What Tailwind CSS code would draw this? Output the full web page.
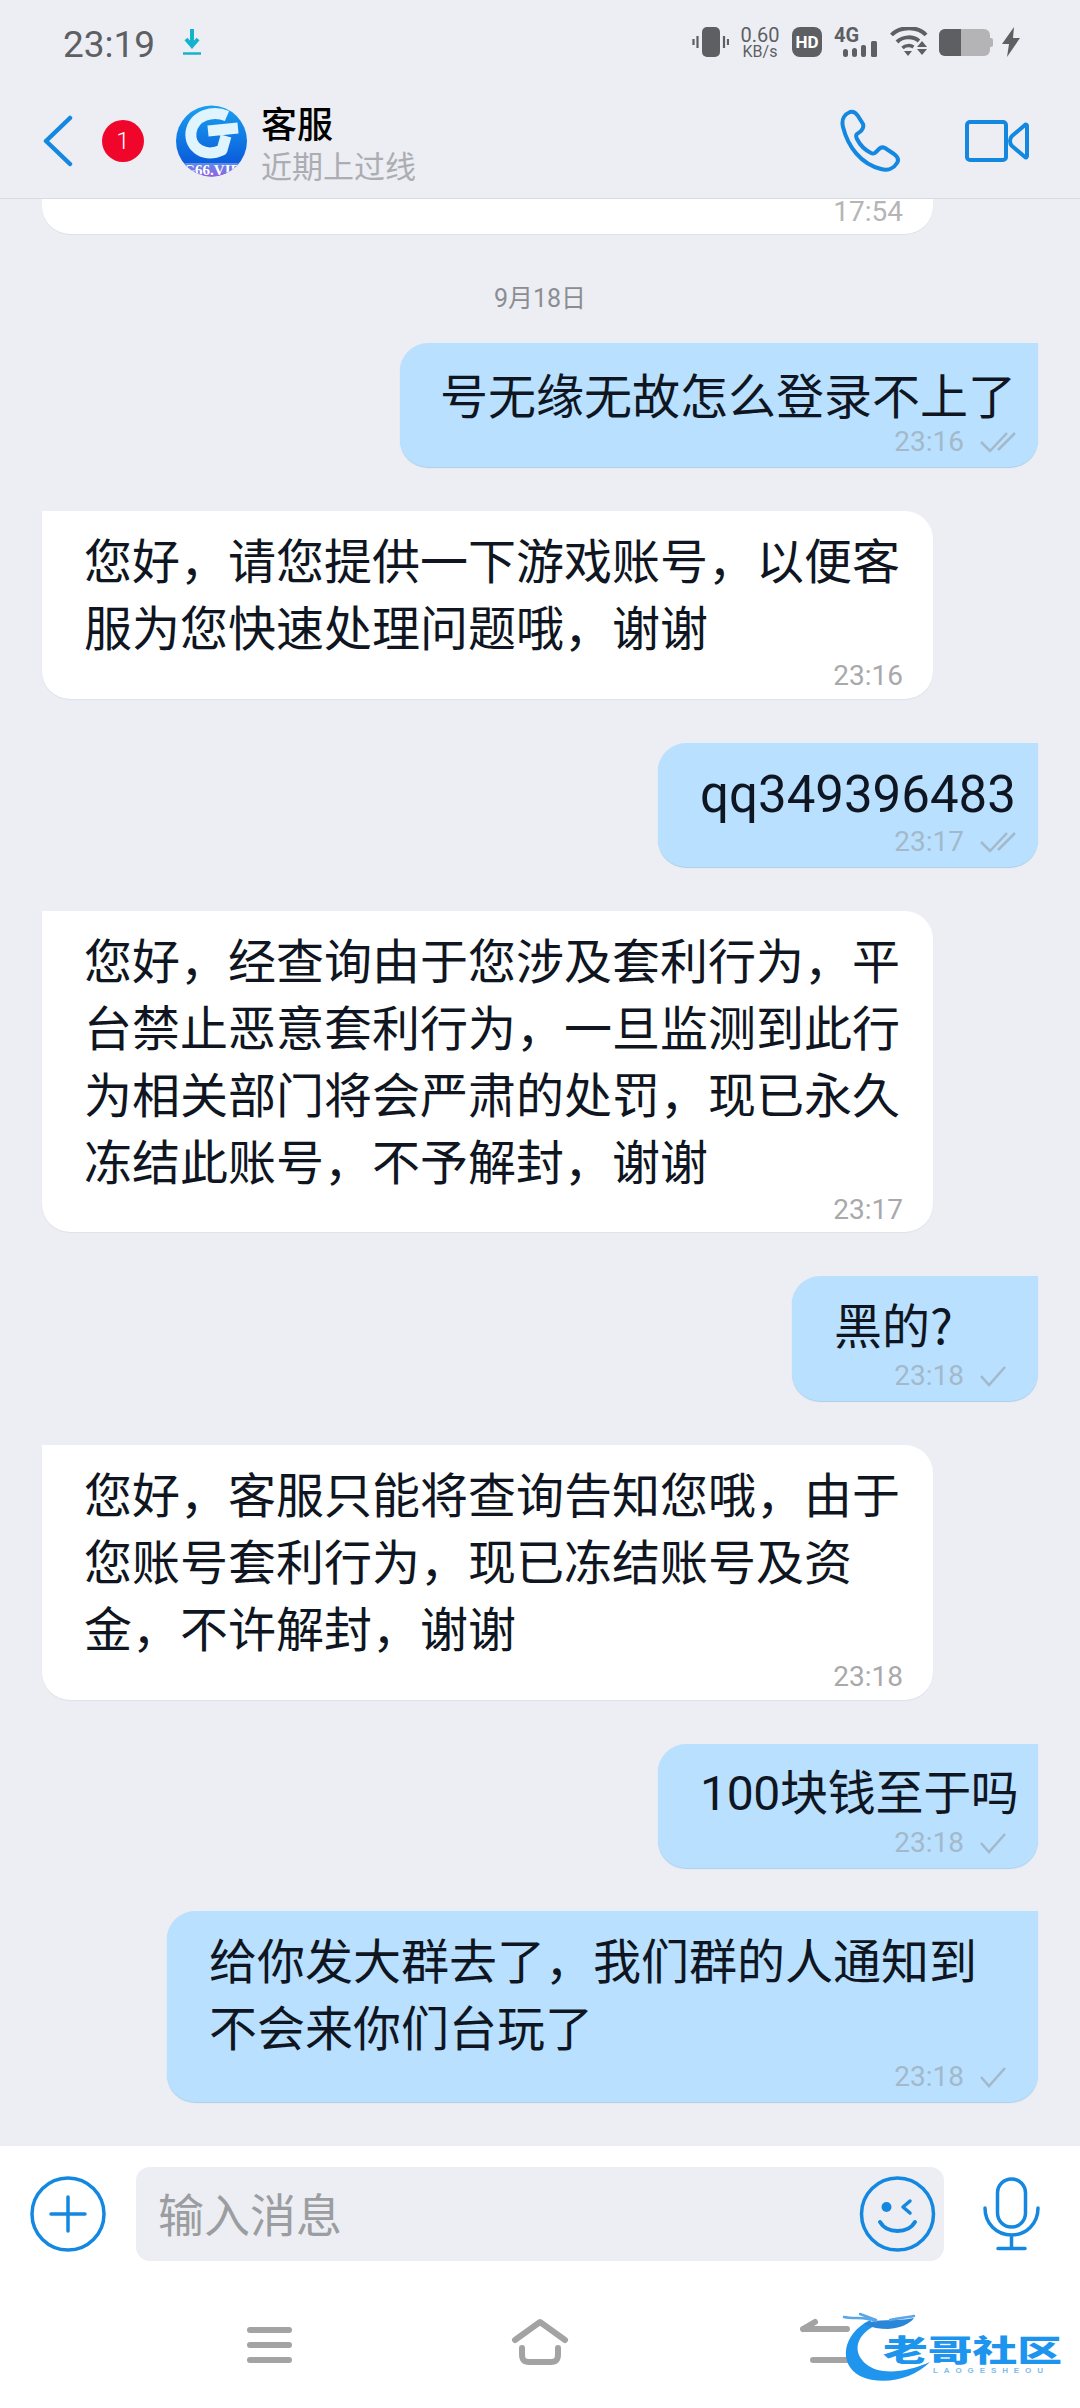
<!DOCTYPE html>
<html lang="zh"><head><meta charset="utf-8">
<script src="https://cdn.jsdelivr.net/npm/@tailwindcss/browser@4"></script>
</head>
<body class="m-0">
<div class="w-[1080px] h-[2408px] overflow-hidden bg-[#eceef3] flex flex-col font-['Noto_Sans','Noto_Sans_CJK_SC',sans-serif] text-[#0f1622] relative">

<!-- status bar -->
<div class="h-[84px] flex items-center pl-[63px] pr-[60px] shrink-0">
  <span class="text-[37px] text-[#5d5f63] font-['Roboto',sans-serif] leading-none w-[119px] pt-[4px]">23:19</span>
  <svg width="20" height="28" viewBox="0 0 20 28" fill="none"><path d="M10 1v16M4 11l6 7 6-7" stroke="#14b3cd" stroke-width="4"/><path d="M1 25.500h18" stroke="#14b3cd" stroke-width="2.500"/></svg>
  <div class="ml-auto flex items-center">
    <svg width="37" height="30" viewBox="0 0 37 30"><rect x="10" y="0" width="18" height="30" rx="5" fill="#5d5f63"/><path d="M5.500 9v12M1.500 12v6M32 9v12M36 12v6" stroke="#5d5f63" stroke-width="2.200"/></svg>
    <div class="ml-[13px] w-[36px] flex flex-col items-center text-[#5d5f63] font-['Roboto',sans-serif]"><span class="text-[20px] leading-[18px]">0.60</span><span class="text-[16px] leading-[15px]">KB/s</span></div>
    <div class="ml-[14px] w-[30px] h-[30px] bg-[#5d5f63] rounded-[8px] text-white text-[17px] font-bold flex items-center justify-center font-['Roboto',sans-serif] leading-none">HD</div>
    <svg class="ml-[12px]" width="43" height="30" viewBox="0 0 43 30"><text x="0" y="15" font-family="Roboto" font-weight="700" font-size="20" fill="#5d5f63">4G</text><rect x="9" y="22" width="5" height="8" rx="2.500" fill="#5d5f63"/><rect x="18" y="21" width="5" height="9" rx="2.500" fill="#5d5f63"/><rect x="27" y="18" width="5" height="12" rx="2" fill="#5d5f63"/><rect x="37" y="14" width="6" height="16" rx="1.500" fill="#5d5f63"/></svg>
    <svg class="ml-[13px]" width="38" height="30" viewBox="0 0 38 30" fill="none"><path d="M1.500 8C10-1 28-1 36 8" stroke="#5d5f63" stroke-width="4"/><path d="M7 15c6-6 16-6 22-1" stroke="#5d5f63" stroke-width="4"/><path d="M12.500 21c3-3 8-3 11-1" stroke="#5d5f63" stroke-width="3.500"/><path d="M14 24h8l-4 5zM32 14l5 6H27zM27 22h10l-5 6z" fill="#5d5f63"/></svg>
    <div class="ml-[11px] w-[51px] h-[27px] rounded-[6px] overflow-hidden flex bg-[#b4b4b6]"><div class="w-[22px] bg-[#5d5f63]"></div></div>
    <div class="w-[3px] h-[9px] bg-[#b4b4b6] rounded-r-[2px]"></div>
    <svg class="ml-[9px]" width="18" height="30" viewBox="0 0 18 30"><path d="M12 0 0 17h7l-2 13L18 11h-7z" fill="#5d5f63"/></svg>
  </div>
</div>

<!-- title bar -->
<div class="h-[115px] border-b-[1px] border-[#d9dadf] flex items-center shrink-0 pl-[43px] pr-[51px]">
  <svg width="30" height="52" viewBox="0 0 30 52" fill="none"><path d="M27 3 3 26l24 23" stroke="#1488e0" stroke-width="4.500" stroke-linecap="round" stroke-linejoin="round"/></svg>
  <div class="ml-[29px] w-[42px] h-[42px] rounded-full bg-[#f0062b] text-white text-[24px] font-['Roboto',sans-serif] font-light flex items-center justify-center leading-none">1</div>
  <svg class="ml-[32px]" width="71" height="72" viewBox="0 0 71 72">
    <defs><linearGradient id="g1" x1="0" y1="0" x2="0" y2="1"><stop offset="0" stop-color="#1aa0f0"/><stop offset="0.78" stop-color="#0b5fdc"/></linearGradient><linearGradient id="g2" x1="0" y1="0" x2="0" y2="1"><stop offset="0" stop-color="#5a8ce8"/><stop offset="1" stop-color="#9a5fe0"/></linearGradient><clipPath id="c1"><circle cx="35.500" cy="36" r="35.500"/></clipPath></defs>
    <circle cx="35.500" cy="36" r="35.500" fill="url(#g1)"/>
    <path d="M51 11C37 5 18 10 15 27c-2 16 14 26 31 18l4-14M62 23l-30 3" fill="none" stroke="#dff4fc" stroke-width="11" stroke-linejoin="round"/>
    <g clip-path="url(#c1)"><rect x="0" y="58" width="71" height="14" fill="url(#g2)"/><text x="35.500" y="69.500" text-anchor="middle" font-family="Liberation Serif" font-weight="700" font-size="15" fill="#fff">G66.VIP</text></g>
  </svg>
  <div class="ml-[14px] flex flex-col pt-[3px]">
    <span class="text-[36px] leading-[40px] text-black font-['Noto_Sans_CJK_SC',sans-serif] font-medium">客服</span>
    <span class="text-[31px] leading-[36px] text-[#abadb2] font-['Noto_Sans_CJK_SC',sans-serif] mt-[5px]">近期上过线</span>
  </div>
  <svg class="ml-auto" width="62" height="64" viewBox="0 0 62 64" fill="none"><path d="M4 18C2 10 6 5 11 3c4-1 6 1 8 4l5 8c1 3 0 5-2 7l-4 3c-1 1-1 3 0 5 3 6 8 11 14 14 2 1 3 1 5-1l3-3c2-2 4-2 6-1l9 6c4 3 5 6 3 9-3 5-9 8-16 6C22 55 9 38 4 18Z" stroke="#1488e0" stroke-width="4" stroke-linejoin="round"/></svg>
  <svg class="ml-[64px]" width="64" height="42" viewBox="0 0 64 42" fill="none"><rect x="2" y="2" width="39" height="38" rx="3" stroke="#1488e0" stroke-width="4"/><path d="M62 6v30c0 1-1 2-2 1L47 26c-1-1-2-2-2-5s1-4 2-5L60 5c1-1 2 0 2 1Z" stroke="#1488e0" stroke-width="4" stroke-linejoin="round"/></svg>
</div>

<!-- messages -->
<div class="h-[1947px] overflow-hidden flex flex-col shrink-0 relative">
  <div class="ml-[42px] w-[891px] h-[35px] bg-white rounded-b-[28px] shadow-[0_1px_0_#dfe1e6] relative shrink-0"><span class="absolute right-[30px] top-[-4px] text-[28px] leading-[34px] text-[#b5b5b7] font-['Roboto',sans-serif]">17:54</span></div>

  <div class="h-[109px] flex items-center justify-center shrink-0 text-[25px] text-[#8b8d92] font-['Roboto','Noto_Sans_CJK_SC',sans-serif] leading-none pt-[19px]"><span>9月18日</span></div>

  <div class="flex flex-col gap-[44px] pr-[42px]">
    <div class="self-end h-[124px] w-[638px] bg-[#b9e0ff] rounded-[28px] rounded-tr-none shadow-[0_1px_1px_#a9cfe9] pl-[40px] pt-[17px] relative">
      <p class="text-[48px] leading-[67px] font-['Noto_Sans_CJK_SC',sans-serif] whitespace-nowrap">号无缘无故怎么登录不上了</p>
      <div class="absolute right-[22px] bottom-[8px] flex items-center gap-[16px]"><span class="text-[28px] leading-[34px] text-[#a3b9ca] font-['Roboto',sans-serif]">23:16</span><svg width="36" height="24" viewBox="0 0 36 24" fill="none"><path d="M1 12l9 9L27 3M18 20 35 3" stroke="#a3b9ca" stroke-width="2.500"/></svg></div>
    </div>
    <div class="ml-[42px] h-[188px] w-[891px] bg-white rounded-[28px] rounded-tl-none shadow-[0_1px_1px_#dfe1e6] pl-[42px] pt-[14px] relative">
      <p class="text-[48px] leading-[67px] font-['Noto_Sans_CJK_SC',sans-serif]">您好，请您提供一下游戏账号，以便客<br>服为您快速处理问题哦，谢谢</p>
      <span class="absolute right-[30px] bottom-[6px] text-[28px] leading-[34px] text-[#a9a9ab] font-['Roboto',sans-serif]">23:16</span>
    </div>
    <div class="self-end h-[124px] w-[380px] bg-[#b9e0ff] rounded-[28px] rounded-tr-none shadow-[0_1px_1px_#a9cfe9] pl-[42px] pt-[18px] relative">
      <p class="text-[51px] leading-[67px] font-['Roboto',sans-serif] whitespace-nowrap">qq349396483</p>
      <div class="absolute right-[22px] bottom-[8px] flex items-center gap-[16px]"><span class="text-[28px] leading-[34px] text-[#a3b9ca] font-['Roboto',sans-serif]">23:17</span><svg width="36" height="24" viewBox="0 0 36 24" fill="none"><path d="M1 12l9 9L27 3M18 20 35 3" stroke="#a3b9ca" stroke-width="2.500"/></svg></div>
    </div>
    <div class="ml-[42px] h-[321px] w-[891px] bg-white rounded-[28px] rounded-tl-none shadow-[0_1px_1px_#dfe1e6] pl-[42px] pt-[14px] relative">
      <p class="text-[48px] leading-[67px] font-['Noto_Sans_CJK_SC',sans-serif]">您好，经查询由于您涉及套利行为，平<br>台禁止恶意套利行为，一旦监测到此行<br>为相关部门将会严肃的处罚，现已永久<br>冻结此账号，不予解封，谢谢</p>
      <span class="absolute right-[30px] bottom-[5px] text-[28px] leading-[34px] text-[#a9a9ab] font-['Roboto',sans-serif]">23:17</span>
    </div>
    <div class="self-end h-[125px] w-[246px] bg-[#b9e0ff] rounded-[28px] rounded-tr-none shadow-[0_1px_1px_#a9cfe9] pl-[42px] pt-[14px] relative">
      <p class="text-[48px] leading-[67px] font-['Noto_Sans_CJK_SC',sans-serif] whitespace-nowrap">黑的?</p>
      <div class="absolute right-[32px] bottom-[8px] flex items-center gap-[16px]"><span class="text-[28px] leading-[34px] text-[#a3b9ca] font-['Roboto',sans-serif]">23:18</span><svg width="26" height="22" viewBox="0 0 26 22" fill="none"><path d="M1 11l8 9L25 2" stroke="#a3b9ca" stroke-width="2.500"/></svg></div>
    </div>
    <div class="ml-[42px] h-[255px] w-[891px] bg-white rounded-[28px] rounded-tl-none shadow-[0_1px_1px_#dfe1e6] pl-[42px] pt-[14px] relative">
      <p class="text-[48px] leading-[67px] font-['Noto_Sans_CJK_SC',sans-serif]">您好，客服只能将查询告知您哦，由于<br>您账号套利行为，现已冻结账号及资<br>金，不许解封，谢谢</p>
      <span class="absolute right-[30px] bottom-[6px] text-[28px] leading-[34px] text-[#a9a9ab] font-['Roboto',sans-serif]">23:18</span>
    </div>
    <div class="self-end h-[124px] w-[380px] bg-[#b9e0ff] rounded-[28px] rounded-tr-none shadow-[0_1px_1px_#a9cfe9] pl-[42px] pt-[16px] relative">
      <p class="text-[48px] leading-[67px] font-['Roboto','Noto_Sans_CJK_SC',sans-serif] whitespace-nowrap tracking-[-0.3px]">100块钱至于吗</p>
      <div class="absolute right-[32px] bottom-[8px] flex items-center gap-[16px]"><span class="text-[28px] leading-[34px] text-[#a3b9ca] font-['Roboto',sans-serif]">23:18</span><svg width="26" height="22" viewBox="0 0 26 22" fill="none"><path d="M1 11l8 9L25 2" stroke="#a3b9ca" stroke-width="2.500"/></svg></div>
    </div>
    <div class="self-end h-[191px] w-[871px] -mt-[1px] bg-[#b9e0ff] rounded-[28px] rounded-tr-none shadow-[0_1px_1px_#a9cfe9] pl-[42px] pt-[14px] relative">
      <p class="text-[48px] leading-[67px] font-['Noto_Sans_CJK_SC',sans-serif] whitespace-nowrap">给你发大群去了，我们群的人通知到<br>不会来你们台玩了</p>
      <div class="absolute right-[32px] bottom-[8px] flex items-center gap-[16px]"><span class="text-[28px] leading-[34px] text-[#a3b9ca] font-['Roboto',sans-serif]">23:18</span><svg width="26" height="22" viewBox="0 0 26 22" fill="none"><path d="M1 11l8 9L25 2" stroke="#a3b9ca" stroke-width="2.500"/></svg></div>
    </div>
  </div>
</div>

<!-- input bar -->
<div class="flex-1 bg-white flex flex-col">
  <div class="h-[136px] flex items-center pl-[30px] shrink-0">
    <svg width="76" height="76" viewBox="0 0 76 76" fill="none"><circle cx="38" cy="38" r="36" stroke="#1488e0" stroke-width="3.500"/><path d="M38 21v34M21 38h34" stroke="#1488e0" stroke-width="3.500" stroke-linecap="round"/></svg>
    <div class="ml-[30px] w-[808px] h-[94px] bg-[#eceef3] rounded-[14px] flex items-center pl-[22px] pr-[8px]">
      <span class="text-[46px] leading-none text-[#9b9da1] font-['Noto_Sans_CJK_SC',sans-serif] pb-[5px]">输入消息</span>
      <svg class="ml-auto" width="77" height="76" viewBox="0 0 77 76" fill="none"><circle cx="38.500" cy="38" r="36" stroke="#1488e0" stroke-width="3.500"/><circle cx="27.500" cy="31" r="5" fill="#1488e0"/><path d="M51 25l-7 6 7 6" stroke="#1488e0" stroke-width="3.500" stroke-linecap="round" stroke-linejoin="round"/><path d="M21 46c7 12 28 12 35 0" stroke="#1488e0" stroke-width="4" stroke-linecap="round"/></svg>
    </div>
    <svg class="ml-[39px]" width="57" height="74" viewBox="0 0 57 74" fill="none"><rect x="14.500" y="2" width="28" height="48" rx="14" stroke="#1488e0" stroke-width="3.500"/><path d="M2 31c0 16 12 27 26.500 27S55 47 55 31M28.500 58v13M15 71.500h27" stroke="#1488e0" stroke-width="3.500" stroke-linecap="round"/></svg>
  </div>
  <!-- nav -->
  <div class="flex-1 relative">
    <div class="absolute left-[247px] top-[45px] flex flex-col gap-[9px]"><div class="w-[45px] h-[6px] rounded-full bg-[#a3a3a3]"></div><div class="w-[45px] h-[6px] rounded-full bg-[#a3a3a3]"></div><div class="w-[45px] h-[6px] rounded-full bg-[#a3a3a3]"></div></div>
    <svg class="absolute left-[510px] top-[36px]" width="60" height="48" viewBox="0 0 60 48" fill="none"><path d="M5 22 30 4l25 18" stroke="#a3a3a3" stroke-width="6" stroke-linecap="round" stroke-linejoin="round"/><path d="M12 30v6c0 6 2 8 7 8h22c5 0 7-2 7-8v-6" stroke="#a3a3a3" stroke-width="6" stroke-linecap="round"/></svg>
    <svg class="absolute left-[798px] top-[36px]" width="60" height="50" viewBox="0 0 60 50" fill="none"><path d="M5 11 17 4M5 11h44M15 42h40" stroke="#a3a3a3" stroke-width="6" stroke-linecap="round"/></svg>
    <!-- watermark -->
    <svg class="absolute left-[830px] top-[30px]" width="250" height="80" viewBox="0 0 250 80" fill="none">
      <path d="M40 8C12 22 8 52 30 64c22 10 52 4 70-14-22 10-50 14-64 2C22 40 26 24 44 14Z" fill="#1f95ee"/>
      <path d="M34 12c14-6 30-2 50-6-4 6-14 10-26 11-8 0-16-1-24-5Z" fill="#2a86d8"/>
      <path d="M14 5c10 2 22 0 32 4M30 2l16 6M60 8c10-2 18-3 24-4" stroke="#5ba7e6" stroke-width="2.500" stroke-linecap="round"/>
      <text x="53" y="49" font-family="Noto Sans CJK SC" font-weight="900" font-size="30" fill="#1d94ee" textLength="179" lengthAdjust="spacingAndGlyphs">老哥社区</text>
      <text x="103" y="61" font-family="Liberation Sans" font-weight="700" font-size="8" fill="#7fbdea" textLength="110" lengthAdjust="spacing">LAOGESHEOU</text>
    </svg>
  </div>
</div>
</div>
</body></html>
